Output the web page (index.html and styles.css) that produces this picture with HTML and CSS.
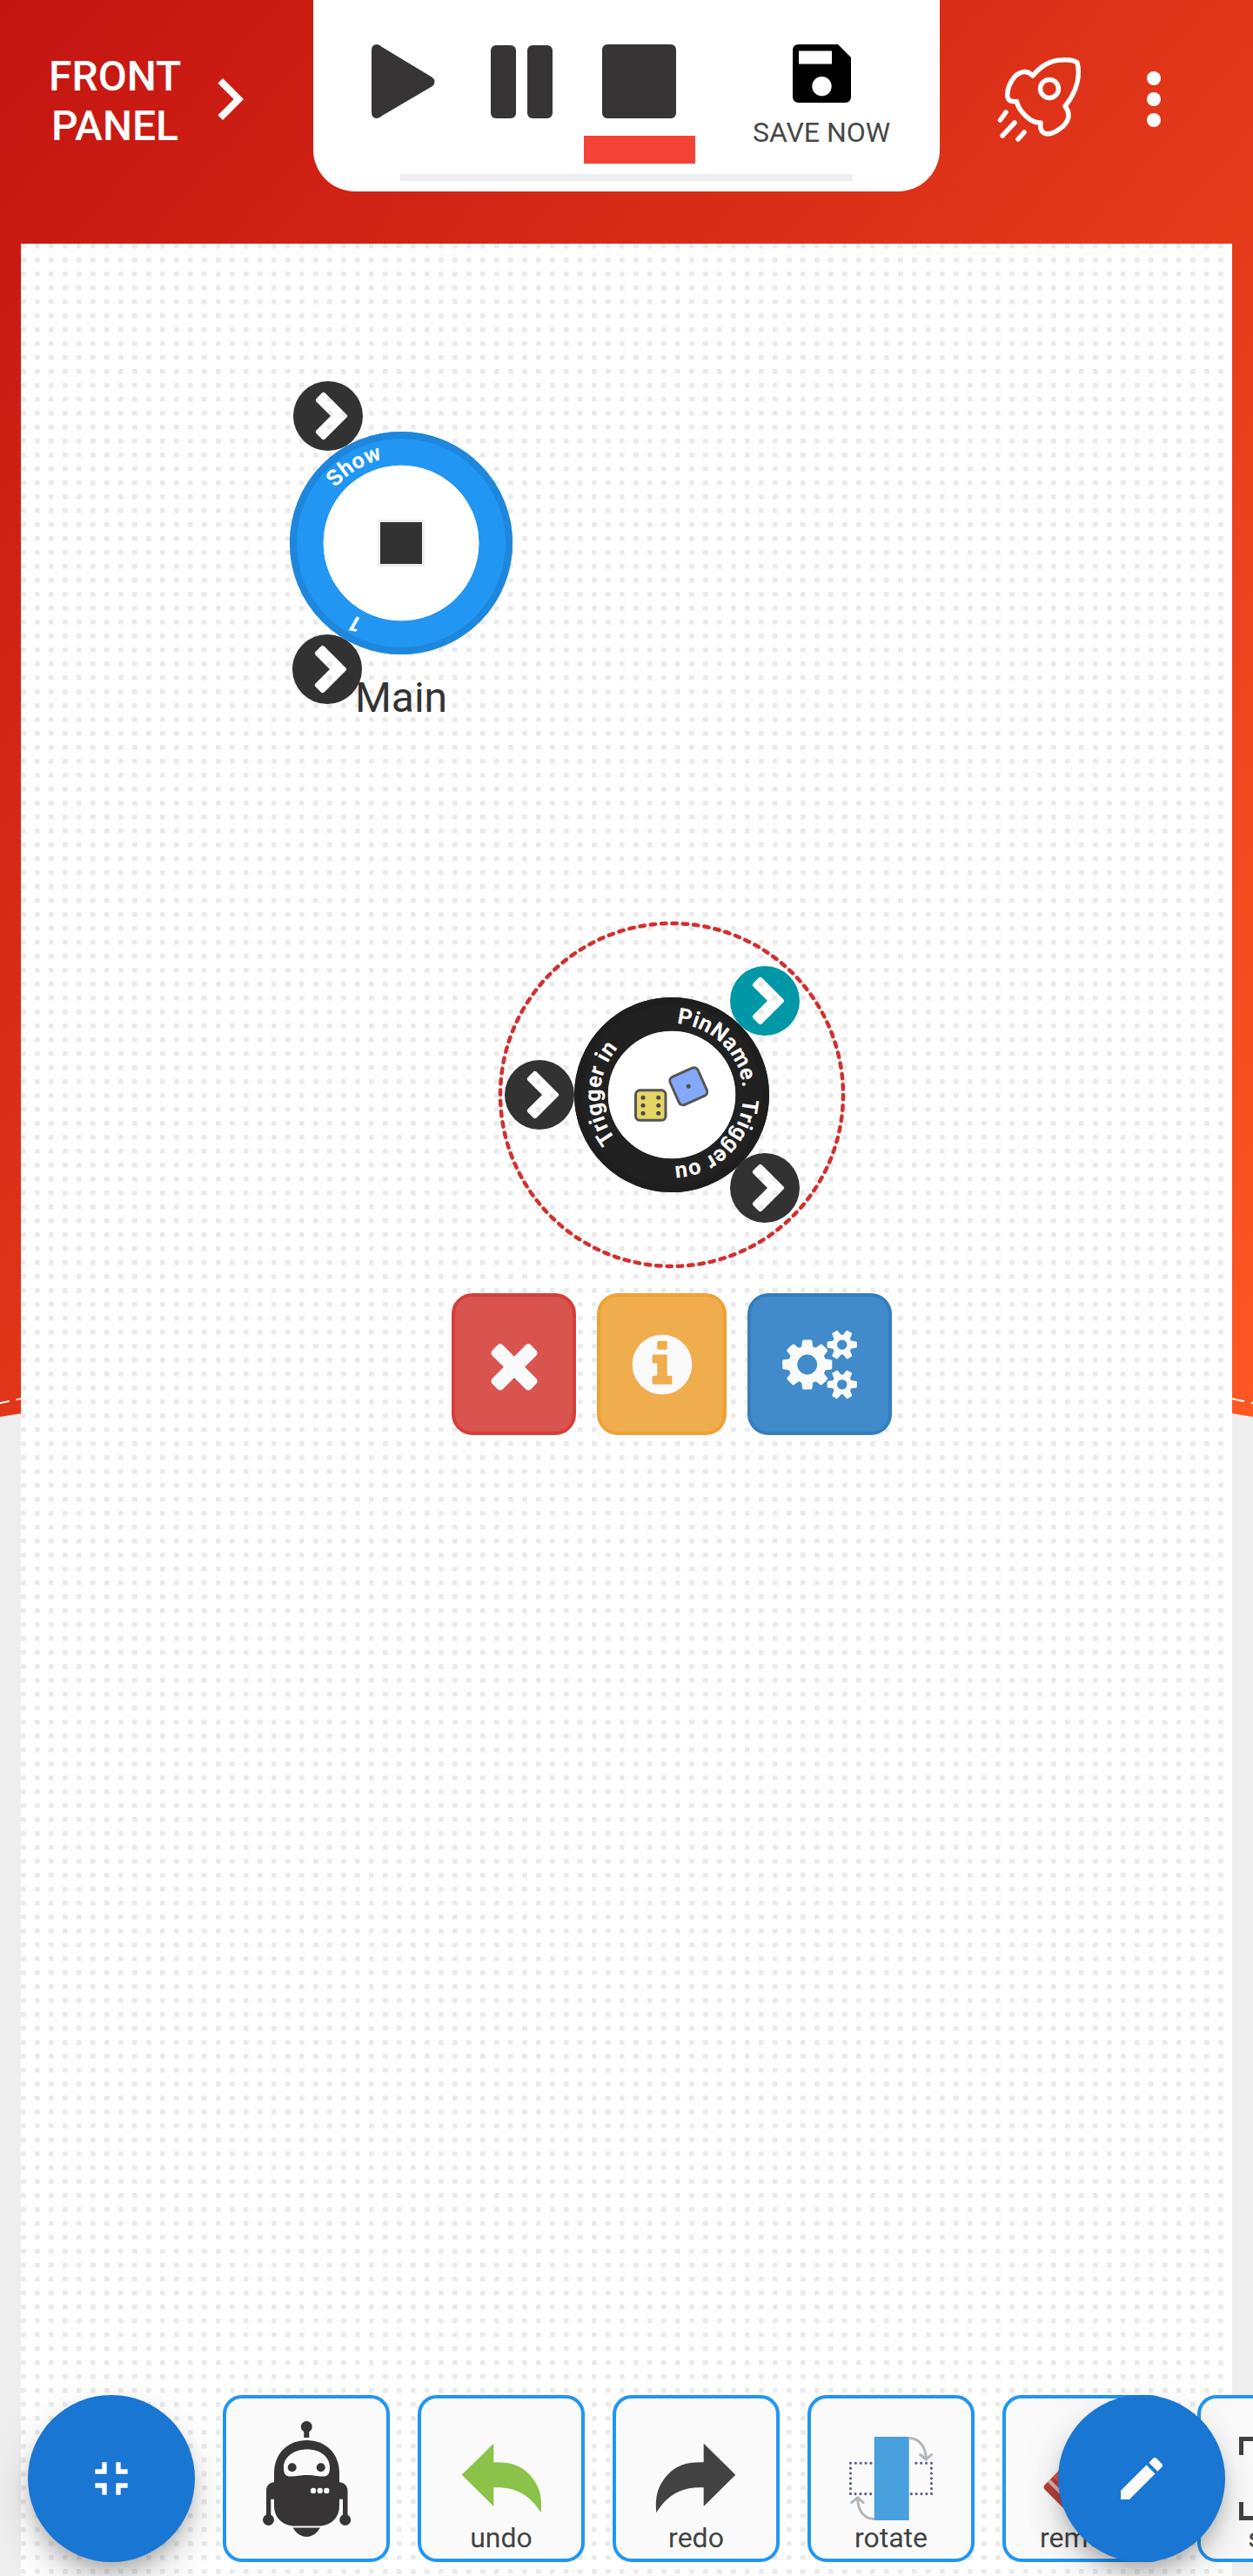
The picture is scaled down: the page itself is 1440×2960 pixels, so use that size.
FILE: index.html
```html
<!DOCTYPE html>
<html lang="en">
<head>
<meta charset="utf-8">
<title>Flow editor</title>
<link rel="stylesheet" href="styles.css">
</head>
<body>
<div class="app">
  <svg class="backdrop" viewBox="0 0 1440 1628" aria-hidden="true">
    <defs>
      <linearGradient id="warm" x1="0" y1="0" x2="1" y2="1">
        <stop offset="0" stop-color="#c31411"/>
        <stop offset="1" stop-color="#ff5722"/>
      </linearGradient>
    </defs>
    <path fill="url(#warm)" d="M0 0H1440V1628Q720 1508 0 1628Z"/>
    <path class="backdrop-stitch" d="M-3 1613Q720 1455 1443 1613"/>
  </svg>

  <header class="topbar">
    <button class="mode-switch">
      <span class="mode-label">FRONT<br>PANEL</span>
      <svg class="mode-arrow" viewBox="0 0 24 24"><path fill="#fff" d="M10 6 8.59 7.41 13.17 12l-4.58 4.59L10 18l6-6z"/></svg>
    </button>

    <section class="player">
      <div class="player-row">
        <button class="control"><svg class="control-icon" viewBox="0 0 96 96"><path fill="#363435" d="M12 12Q12 5 18 5Q21 5 24 8L82 43Q87 48 82 53L24 87Q21 90 18 90Q12 90 12 83Z"/></svg></button>
        <button class="control"><svg class="control-icon" viewBox="0 0 96 96"><rect x="13" y="6" width="29" height="84" rx="6" fill="#363435"/><rect x="55" y="6" width="29" height="84" rx="6" fill="#363435"/></svg></button>
        <button class="control control-active"><svg class="control-icon" viewBox="0 0 96 96"><rect x="5" y="5" width="85" height="85" rx="6" fill="#363435"/></svg></button>
        <button class="save">
          <svg class="save-icon" viewBox="0 0 67 67"><path fill="#000" fill-rule="evenodd" d="M7 0H52L67 15V60Q67 67 60 67H7Q0 67 0 60V7Q0 0 7 0ZM7 7.500V22.500H45V7.500ZM33.500 37A11.200 11.200 0 1 0 33.500 59.400A11.200 11.200 0 1 0 33.500 37Z"/></svg>
          <span class="save-label">SAVE NOW</span>
        </button>
      </div>
      <div class="progress"></div>
    </section>

    <div class="actions">
      <button class="action"><svg class="rocket" viewBox="0 0 100 100" fill="none" stroke="#fff" stroke-width="5.500" stroke-linecap="round" stroke-linejoin="round">
        <path d="M92 6C96 22 91 40 78 56C86 66 81 76 72 82C60 91 48 90 50 75C38 76 24 60 22.500 50.500C10 52 10 43 14 32C17 25 22 19 26 18C32 15 37 17 41 21C51 9 62 3 74 3Q87 2 92 6Z"/>
        <circle cx="60" cy="36" r="10.500"/>
        <path d="M10 63 3.500 72M20 75 6 90M31 86 24 94"/></svg></button>
      <button class="action more"><i class="dot"></i><i class="dot"></i><i class="dot"></i></button>
    </div>
  </header>

  <main class="board">
    <svg class="grid" width="1392" height="2680" aria-hidden="true">
      <defs><pattern id="dots" width="16" height="16" patternUnits="userSpaceOnUse"><rect x="0" y="0" width="5.600" height="5.600" rx="1.200" fill="#eaeaea"/></pattern></defs>
      <rect width="1392" height="2680" fill="url(#dots)"/>
    </svg>

    <svg class="node node-main" viewBox="-128 -190 260 400">
      <defs>
        <path id="ring-main" d="M0 -98.500A98.500 98.500 0 1 1 -.01 -98.500"/>
        <path id="pin" fill-rule="evenodd" d="M40 0A40 40 0 1 1 -40 0A40 40 0 1 1 40 0ZM21.500 -1.500L-3.500 -26.500Q-5.300 -28 -7 -26.500L-13.500 -20Q-15 -18.300 -13.500 -16.500L3 0L-13.500 16.500Q-15 18.300 -13.500 20L-7 26.500Q-5.300 28 -3.500 26.500L21.500 1.500Q23 0 21.500 -1.500Z"/>
      </defs>
      <circle r="108.700" fill="none" stroke="#2196f3" stroke-width="38.700"/>
      <circle r="124" fill="none" stroke="#1e87db" stroke-width="8"/>
      <circle r="89.300" fill="#fff"/>
      <rect x="-25.500" y="-25.500" width="51" height="51" fill="#323232" stroke="#eee" stroke-width="3"/>
      <text class="ring-text" transform="rotate(310)"><textPath href="#ring-main">Show</textPath></text>
      <text class="ring-text" transform="rotate(205.500)"><textPath href="#ring-main">1</textPath></text>
      <use href="#pin" x="-84" y="-146" fill="#323232"/>
      <use href="#pin" x="-85" y="145" fill="#323232"/>
      <text class="node-title" x="0" y="194">Main</text>
    </svg>

    <svg class="node node-random" viewBox="-200 -200 400 400">
      <defs><path id="ring-random" d="M0 -82A82 82 0 1 1 -.01 -82"/></defs>
      <circle class="selection" r="197"/>
      <circle r="92.500" fill="none" stroke="#212121" stroke-width="39"/>
      <circle r="108" fill="none" stroke="#1e1e1e" stroke-width="8"/>
      <circle r="73.300" fill="#fff"/>
      <g stroke="#555" stroke-width="3">
        <rect x="-41.500" y="-5.200" width="34.500" height="34.500" rx="5" fill="#e5d565"/>
        <rect x="-17.500" y="-17.500" width="35" height="35" rx="5" fill="#84a9f8" transform="translate(19.300 -9.700) rotate(-24)"/>
      </g>
      <g fill="#4a4a4a">
        <circle cx="-33" cy="3.300" r="2.500"/><circle cx="-33" cy="12.300" r="2.500"/><circle cx="-33" cy="21.300" r="2.500"/>
        <circle cx="-15.300" cy="3.300" r="2.500"/><circle cx="-15.300" cy="12.300" r="2.500"/><circle cx="-15.300" cy="21.300" r="2.500"/>
        <circle cx="19.300" cy="-9.700" r="2.500"/>
      </g>
      <text class="ring-text" transform="rotate(231.500)"><textPath href="#ring-random">Trigger in</textPath></text>
      <text class="ring-text" transform="rotate(4)"><textPath href="#ring-random">PinName.</textPath></text>
      <text class="ring-text" transform="rotate(93)"><textPath href="#ring-random">Trigger ou</textPath></text>
      <use href="#pin" x="-152" y="0" fill="#323232"/>
      <use href="#pin" x="107" y="-108" fill="#0097a7"/>
      <use href="#pin" x="107" y="107" fill="#323232"/>
    </svg>

    <div class="node-actions">
      <button class="btn btn-danger"><svg class="btn-icon" viewBox="0 0 1792 1792"><path d="M1490 1322q0 40-28 68l-136 136q-28 28-68 28t-68-28l-294-294-294 294q-28 28-68 28t-68-28l-136-136q-28-28-28-68t28-68l294-294-294-294q-28-28-28-68t28-68l136-136q28-28 68-28t68 28l294 294 294-294q28-28 68-28t68 28l136 136q28 28 28 68t-28 68l-294 294 294 294q28 28 28 68z"/></svg></button>
      <button class="btn btn-warning"><svg class="btn-icon" viewBox="0 0 1792 1792"><path d="M1152 1376v-160q0-14-9-23t-23-9h-96v-512q0-14-9-23t-23-9h-320q-14 0-23 9t-9 23v160q0 14 9 23t23 9h96v320h-96q-14 0-23 9t-9 23v160q0 14 9 23t23 9h448q14 0 23-9t9-23zm-128-896v-160q0-14-9-23t-23-9h-192q-14 0-23 9t-9 23v160q0 14 9 23t23 9h192q14 0 23-9t9-23zm640 416q0 209-103 385.500t-279.500 279.500-385.500 103-385.500-103-279.500-279.500-103-385.500 103-385.500 279.500-279.500 385.500-103 385.500 103 279.500 279.500 103 385.500z"/></svg></button>
      <button class="btn btn-primary"><svg class="btn-icon" viewBox="0 0 1792 1792"><path d="M832 896q0-106-75-181t-181-75-181 75-75 181 75 181 181 75 181-75 75-181zm768 512q0-52-38-90t-90-38-90 38-38 90q0 53 37.500 90.500t90.500 37.500 90.500-37.500 37.500-90.500zm0-1024q0-52-38-90t-90-38-90 38-38 90q0 53 37.500 90.500t90.500 37.500 90.500-37.500 37.500-90.500zm-384 421v185q0 10-7 19.500t-16 10.500l-155 24q-11 35-32 76 34 48 90 115 7 11 7 20 0 12-7 19-23 30-82.500 89.500t-78.500 59.500q-11 0-21-7l-115-90q-37 19-77 31-11 108-23 155-7 24-30 24h-186q-11 0-20-7.500t-10-17.500l-23-153q-34-10-75-31l-118 89q-7 7-20 7-11 0-21-8-144-133-144-160 0-9 7-19 10-14 41-53t47-61q-23-44-35-82l-152-24q-10-1-17-9.500t-7-19.500v-185q0-10 7-19.500t16-10.500l155-24q11-35 32-76-34-48-90-115-7-11-7-20 0-12 7-20 22-30 82-89t79-59q11 0 21 7l115 90q34-18 77-32 11-108 23-154 7-24 30-24h186q11 0 20 7.500t10 17.500l23 153q34 10 75 31l118-89q8-7 20-7 11 0 21 8 144 133 144 160 0 8-7 19-12 16-42 54t-45 60q23 48 34 82l152 23q10 2 17 10.500t7 19.500zm640 533v140q0 16-149 31-12 27-30 52 51 113 51 138 0 4-4 7-122 71-124 71-8 0-46-47t-52-68q-20 2-30 2t-30-2q-14 21-52 68t-46 47q-2 0-124-71-4-3-4-7 0-25 51-138-18-25-30-52-149-15-149-31v-140q0-16 149-31 13-29 30-52-51-113-51-138 0-4 4-7 4-2 35-20t59-34 30-16q8 0 46 46.500t52 67.500q20-2 30-2t30 2q51-71 92-112l6-2q4 0 124 70 4 3 4 7 0 25-51 138 17 23 30 52 149 15 149 31zm0-1024v140q0 16-149 31-12 27-30 52 51 113 51 138 0 4-4 7-122 71-124 71-8 0-46-47t-52-68q-20 2-30 2t-30-2q-14 21-52 68t-46 47q-2 0-124-71-4-3-4-7 0-25 51-138-18-25-30-52-149-15-149-31v-140q0-16 149-31 13-29 30-52-51-113-51-138 0-4 4-7 4-2 35-20t59-34 30-16q8 0 46 46.500t52 67.500q20-2 30-2t30 2q51-71 92-112l6-2q4 0 124 70 4 3 4 7 0 25-51 138 17 23 30 52 149 15 149 31z"/></svg></button>
    </div>
  </main>

  <nav class="toolbar">
    <button class="tool"><svg class="tool-icon" viewBox="0 0 192 192">
      <g fill="#363435">
        <circle cx="96.300" cy="36.500" r="6.500"/><rect x="93.300" y="40" width="6" height="9"/>
        <path d="M59 90C59 66 76 52 96.500 52S134 66 134 90V127C134 140 126 149 113 150.500H80C67 149 59 140 59 127Z"/>
        <path d="M61 100C54 100 50 104 50 110V140H55.300V119.700H61ZM132 100C139 100 143.500 104 143.500 110V140H138V119.700H132Z"/>
        <circle cx="52.500" cy="143.500" r="6.500"/><circle cx="140.700" cy="143.500" r="6.500"/>
        <path d="M80.500 152.500H112Q106 163 96.300 163T80.500 152.500Z"/>
      </g>
      <path d="M97 62.500C112 62.500 123 71 123 83C123 91 121 93.500 115 93.500C107 93.500 105 92 97 92S86 93.500 78 93.500C72 93.500 70 91 70 83C70 71 82 62.500 97 62.500Z" fill="#fafafa"/>
      <circle cx="79.700" cy="83.300" r="5" fill="#363435"/><circle cx="112.700" cy="83.300" r="5" fill="#363435"/>
      <g fill="#fafafa"><circle cx="104" cy="110" r="3.200"/><circle cx="111.700" cy="110" r="3.200"/><circle cx="119.300" cy="110" r="3.200"/></g>
    </svg></button>

    <button class="tool"><svg class="tool-icon" viewBox="0 0 192 192"><path fill="#8bc34a" d="M50.700 91.700 87.300 55.700V77.300C108 77 119 81 129 92C140 104 143.500 117 141.700 135.300C129 114 111 105 87.300 106.300V128Z"/></svg><span class="tool-label">undo</span></button>

    <button class="tool"><svg class="tool-icon" viewBox="0 0 192 192"><path transform="matrix(-1 0 0 1 192 0)" fill="#424242" d="M50.700 91.700 87.300 55.700V77.300C108 77 119 81 129 92C140 104 143.500 117 141.700 135.300C129 114 111 105 87.300 106.300V128Z"/></svg><span class="tool-label">redo</span></button>

    <button class="tool"><svg class="tool-icon" viewBox="0 0 192 192">
      <g fill="none" stroke="#5a6088" stroke-width="3.200" stroke-linecap="round" stroke-dasharray="0 5.850"><path d="M72.900 78.300H49.500V113.700H76M142.400 78.300H119M142.400 78.300V113.700H119"/></g>
      <rect x="76.700" y="48" width="40" height="96" fill="#48a0dc"/>
      <g fill="none" stroke="#b0b6ba" stroke-width="3" stroke-linecap="round"><path d="M117 49.500C129 50 136 60 136.300 73M129.500 68.500 136.300 74 142.500 68.500M76 142.500C64 142 58 132 57.700 119M50.700 123.500 57.700 118 64 123.500"/></g>
    </svg><span class="tool-label">rotate</span></button>

    <button class="tool"><svg class="tool-icon" viewBox="0 0 192 192"><path d="M49 103 84 68 104 93 91 133 76 136 49 109Q46 106 49 103Z" fill="#b5433b"/><path d="M58 94 84 68 100 88 85 121Z" fill="#dc5448"/><path d="M52 100 55 97 90 132 87 135Z" fill="#e0b3af"/></svg><span class="tool-label">remove</span></button>

    <button class="tool"><svg class="tool-icon" viewBox="0 0 192 192"><path fill="none" stroke="#424242" stroke-width="5" d="M50.500 69V50.500H69M50.500 123V141.500H69M123 50.500H141.500V69M123 141.500H141.500V123"/></svg><span class="tool-label">scale</span></button>
  </nav>

  <button class="fab fab-left"><svg class="fab-icon" viewBox="0 0 24 24"><path fill="#fff" d="M5 16h3v3h2v-5H5v2zm3-8H5v2h5V5H8v3zm6 11h2v-3h3v-2h-5v5zm2-11V5h-2v5h5V8h-3z"/></svg></button>
  <button class="fab fab-right"><svg class="fab-icon" viewBox="0 0 24 24"><path fill="#fff" d="M3 17.250V21h3.750L17.810 9.940l-3.750-3.750L3 17.250zM20.710 7.040c.39-.39.39-1.020 0-1.410l-2.340-2.340c-.39-.39-1.020-.39-1.410 0l-1.830 1.830 3.750 3.750 1.830-1.830z"/></svg></button>
</div>
</body>
</html>
```
FILE: styles.css
```css
* { box-sizing: border-box; }

body {
  margin: 0;
  background: #eee;
  font-family: Roboto, "Liberation Sans", sans-serif;
}

button {
  margin: 0;
  padding: 0;
  border: 0;
  background: none;
  font: inherit;
  color: inherit;
}

svg { display: block; }

.app {
  position: relative;
  display: flex;
  flex-direction: column;
  width: 1440px;
  height: 2960px;
  overflow: hidden;
}

.backdrop {
  position: absolute;
  top: 0;
  left: 0;
  width: 1440px;
  height: 1628px;
}

.backdrop-stitch {
  fill: none;
  stroke: #fff;
  stroke-width: 2;
  stroke-dasharray: 14 8;
}

/* Header */
.topbar {
  position: relative;
  display: grid;
  grid-template-columns: 360px 720px 360px;
  align-items: start;
  height: 280px;
}

.mode-switch {
  display: flex;
  align-items: center;
  height: 228px;
  padding-left: 56px;
  color: #fff;
}

.mode-label {
  width: 152px;
  padding-top: 4px;
  font-size: 48px;
  font-weight: 500;
  line-height: 57px;
  text-align: center;
}

.mode-arrow {
  width: 96px;
  height: 96px;
  margin-left: 8px;
}

.player {
  height: 220px;
  padding-top: 44px;
  border-radius: 0 0 48px 48px;
  background: #fff;
}

.player-row {
  display: flex;
  height: 144px;
  padding-left: 39px;
}

.control {
  display: flex;
  justify-content: center;
  width: 128px;
  margin-right: 8px;
  padding-top: 2px;
  border-bottom: 32px solid transparent;
}

.control-active { border-bottom-color: #f44336; }

.control-icon {
  width: 96px;
  height: 96px;
}

.save {
  display: flex;
  flex-direction: column;
  align-items: center;
  width: 200px;
  margin-left: 37px;
  padding-top: 7px;
}

.save-icon {
  width: 67px;
  height: 67px;
}

.save-label {
  margin-top: 15px;
  color: #484848;
  font-size: 32px;
  line-height: 38px;
  white-space: nowrap;
}

.progress {
  width: 520px;
  height: 8px;
  margin: 12px auto 0;
  background: #eee;
}

.actions {
  display: flex;
  align-items: center;
  height: 228px;
  padding-left: 66px;
}

.action { padding-top: 4px; }

.rocket {
  width: 100px;
  height: 100px;
}

.more {
  display: flex;
  flex-direction: column;
  gap: 8px;
  margin-left: 72px;
  padding-top: 0;
}

.dot {
  width: 16px;
  height: 16px;
  border-radius: 50%;
  background: #fff;
}

/* Canvas */
.board {
  position: relative;
  flex: 1;
  margin: 0 24px;
  background: #fff;
}

.node { position: absolute; }

.node-main {
  left: 309px;
  top: 154px;
  width: 260px;
  height: 400px;
}

.node-random {
  left: 548px;
  top: 778px;
  width: 400px;
  height: 400px;
}

.selection {
  fill: none;
  stroke: #d32f2f;
  stroke-width: 4.500px;
  stroke-linecap: round;
  stroke-dasharray: 5.400 6.978;
}

.ring-text {
  fill: #fff;
  font-size: 25.6px;
  font-weight: 700;
  letter-spacing: .3px;
}

.node-title {
  fill: #333;
  font-size: 48px;
  text-anchor: middle;
}

.node-actions {
  position: absolute;
  left: 495px;
  top: 1206px;
  display: flex;
  gap: 24px;
}

.btn {
  display: flex;
  align-items: center;
  justify-content: center;
  width: 143px;
  height: 163px;
  border: 4px solid;
  border-radius: 24px;
}

.btn-danger { border-color: #d43f3a; background: #d9534f; }
.btn-warning { width: 149px; border-color: #eea236; background: #f0ad4e; }
.btn-primary { width: 166px; border-color: #357ebd; background: #428bca; }

.btn-icon {
  width: 80px;
  height: 80px;
  overflow: visible;
  fill: #fafafa;
}

/* Bottom tools */
.toolbar {
  position: absolute;
  left: 256px;
  bottom: 16px;
  display: flex;
  gap: 32px;
}

.tool {
  display: grid;
  flex: none;
  width: 192px;
  height: 192px;
  border: 4px solid #2196f3;
  border-radius: 22px;
  background: #fafafa;
}

.tool-icon {
  grid-area: 1 / 1;
  width: 192px;
  height: 192px;
  margin: -4px;
}

.tool-label {
  grid-area: 1 / 1;
  align-self: end;
  margin-bottom: 5px;
  color: #424242;
  font-size: 32px;
  line-height: 38px;
  text-align: center;
}

.fab {
  position: absolute;
  bottom: 16px;
  display: flex;
  align-items: center;
  justify-content: center;
  width: 192px;
  height: 192px;
  border-radius: 50%;
  background: #1976d2;
  box-shadow: 0 12px 20px -4px rgba(0, 0, 0, .2), 0 24px 40px rgba(0, 0, 0, .14), 0 4px 72px rgba(0, 0, 0, .04);
}

.fab-left { left: 32px; }
.fab-right { right: 32px; }

.fab-icon {
  width: 64px;
  height: 64px;
}
```
